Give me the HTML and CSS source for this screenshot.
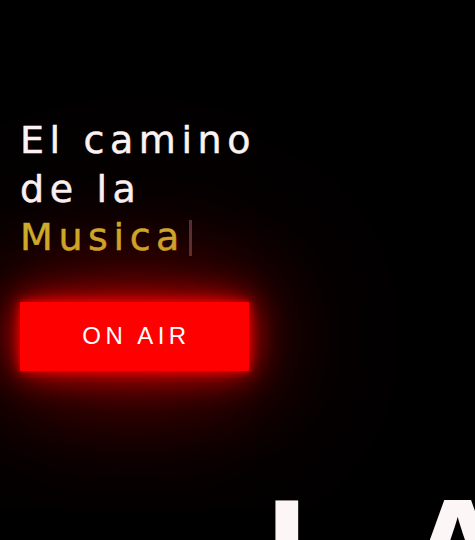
FILE: index.html
```html
<!DOCTYPE html>
<html lang="es">
<head>
<meta charset="utf-8">
<title>El camino de la Musica</title>
<link rel="stylesheet" href="styles.css">
</head>
<body>
<main class="page">
  <section class="hero">
    <h1 class="title">El camino<br>de la<br><span class="accent">Musica</span><span class="cursor"></span></h1>
    <button class="onair">ON AIR</button>
  </section>
  <section class="next">
    <h2 class="big">LA</h2>
  </section>
</main>
</body>
</html>
```
FILE: styles.css
```css
html, body {
  margin: 0;
  padding: 0;
  background: #000;
  height: 540px;
  overflow: hidden;
}
.page {
  display: flex;
  flex-direction: column;
}
.hero {
  display: flex;
  flex-direction: column;
  align-items: flex-start;
  padding: 116px 20px 0;
}
.title {
  margin: 0;
  font-family: "DejaVu Sans", sans-serif;
  font-weight: 400;
  font-size: 38px;
  line-height: 48.5px;
  letter-spacing: 5.6px;
  -webkit-text-stroke: 0.5px currentColor;
  color: #fbf6f6;
}
.accent {
  color: #cbb82e;
}
.cursor {
  display: inline-block;
  width: 3px;
  height: 36px;
  margin-left: 4px;
  vertical-align: -6px;
  background: #4a3434;
}
.onair {
  margin-top: 40px;
  width: 229px;
  height: 69px;
  border: none;
  background: #ff0000;
  color: #fff;
  font-family: "Liberation Sans", Arial, sans-serif;
  font-size: 24px;
  letter-spacing: 4.5px;
  padding: 0 0 0 4px;
  box-shadow:
    0 0 10px #ff0000,
    0 0 36px #ff0000,
    0 0 110px rgba(255, 0, 0, 0.7),
    0 0 240px rgba(255, 0, 0, 0.3);
}
.next {
  padding: 105px 0 0 265px;
}
.big {
  margin: 0;
  font-family: "Liberation Sans", Arial, sans-serif;
  font-weight: 700;
  font-size: 157px;
  line-height: 1;
  letter-spacing: 40px;
  color: #fdf6f6;
  white-space: nowrap;
}
```
